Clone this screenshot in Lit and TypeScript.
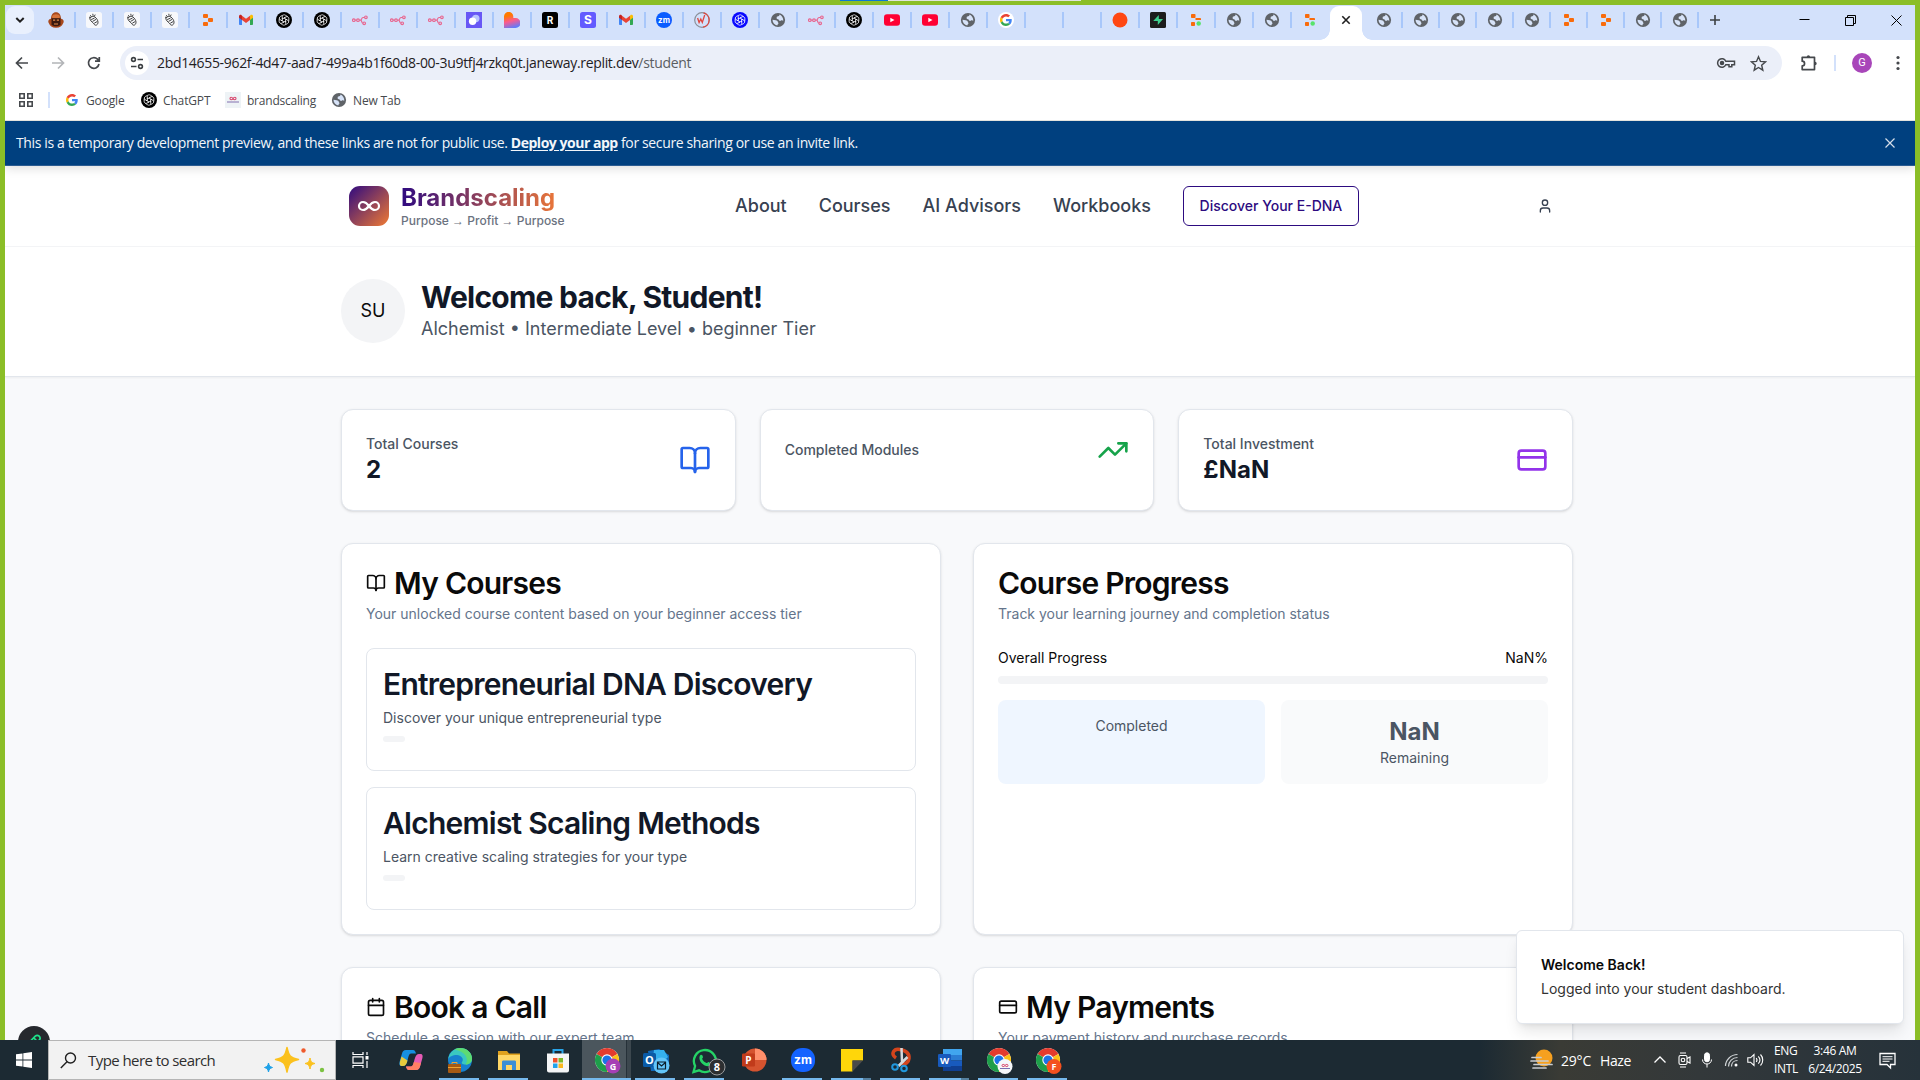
import { LitElement, html, css, svg, TemplateResult } from "lit";
import { customElement } from "lit/decorators.js";

/* ---------- shared glyphs ---------- */

const knot = (bg: string, fg = "#fff") => html`<svg width="16" height="16" viewBox="0 0 16 16">
  <circle cx="8" cy="8" r="8" fill=${bg} />
  <g fill="none" stroke=${fg} stroke-width=".75">
    ${[0, 60, 120, 180, 240, 300].map(
      (a) => svg`<path transform="rotate(${a} 8 8)" d="M6.300 6.900V4.600a1.900 1.900 0 0 1 2.900-1.500l2.300 1.400M8 6l2.800 1.700" />`
    )}
  </g>
</svg>`;

const globe = html`<svg width="16" height="16" viewBox="0 0 16 16">
  <circle cx="8" cy="8" r="7.100" fill="#5f6368" />
  <path d="M9.600 2.600c-.3 1.500-1 1.900-2.200 2-.9.1-.9.9-.6 1.400.3.6-.2 1-.8 1 1.600 0 2.600.2 3 1.200.4.900 1.400.9 2 .4.600-.5 1.500-.3 2.300.2.100-2.700-1.500-5.200-3.700-6.200z" fill="#d7e3f8" />
  <path d="M2.500 7.800l3.200.4c1.200.2 1.900.8 2.100 1.600.1.700.8.8.6 1.700-.2.800-.9.8-1.100 2-2.800-.5-4.800-2.900-4.800-5.700z" fill="#d7e3f8" />
</svg>`;

const gmail = html`<svg width="16" height="16" viewBox="0 0 16 16">
  <path d="M1 4v8.200c0 .5.4.8.9.8H4V6.500z" fill="#4285f4" />
  <path d="M15 4v8.200c0 .5-.4.8-.9.8H12V6.500z" fill="#34a853" />
  <path d="M12 3.700V8l3-2.300V4.200c0-1.500-1.600-1.900-2.400-1.200z" fill="#fbbc04" />
  <path d="M4 8V3.700l4 3 4-3V8l-4 3z" fill="#ea4335" />
  <path d="M1 4.200v1.500L4 8V3.700L3.400 3C2.500 2.400 1 2.900 1 4.200z" fill="#c5221f" />
</svg>`;

const google = (s: number) => html`<svg width=${s} height=${s} viewBox="0 0 48 48">
  <path fill="#EA4335" d="M24 9.500c3.540 0 6.710 1.220 9.210 3.600l6.850-6.850C35.900 2.380 30.470 0 24 0 14.620 0 6.510 5.380 2.560 13.220l7.980 6.190C12.430 13.720 17.740 9.500 24 9.500z" />
  <path fill="#4285F4" d="M46.980 24.550c0-1.570-.15-3.090-.38-4.550H24v9.020h12.940c-.58 2.960-2.260 5.480-4.780 7.180l7.730 6c4.510-4.180 7.090-10.360 7.090-17.650z" />
  <path fill="#FBBC05" d="M10.530 28.590c-.48-1.450-.76-2.990-.76-4.590s.27-3.140.76-4.590l-7.980-6.190C.92 16.460 0 20.120 0 24c0 3.880.92 7.540 2.560 10.780l7.970-6.190z" />
  <path fill="#34A853" d="M24 48c6.480 0 11.930-2.130 15.890-5.810l-7.730-6c-2.150 1.450-4.920 2.300-8.160 2.300-6.260 0-11.570-4.220-13.470-9.910l-7.980 6.190C6.510 42.620 14.620 48 24 48z" />
</svg>`;

const shell = html`<svg width="16" height="16" viewBox="0 0 16 16">
  <rect width="16" height="16" rx="2.500" fill="#f7f8fb" />
  <g fill="none" stroke="#2c2c2c" stroke-width=".9" stroke-linejoin="round">
    <path d="M3.800 6.200c1-1.700 3.800-2.400 5.200-1.200 1.500 1.200 3 3.400 3 5.200 0 1.600-.9 3-2.300 3-1.300 0-1.500-1.200-2.500-2.200C5.800 9.700 4 8.500 3.800 6.200z" />
    <path d="M4.300 3.200l1 1.600M6.800 1.800l.3 2M9.200 2.600l-.8 1.600M5.200 7.600l3.300-1.500M6.600 9.400l3.400-2M8.300 11.200l2.800-1.600M3 5l1.500.8" />
  </g>
</svg>`;

const replit = html`<svg width="16" height="16" viewBox="0 0 16 16" fill="#f96b0b">
  <rect x="3" y="2" width="5" height="4" rx="1" />
  <rect x="8" y="6" width="5" height="4" rx="1" />
  <rect x="3" y="10" width="5" height="4" rx="1" />
</svg>`;

const replitLive = html`<svg width="16" height="16" viewBox="0 0 16 16" fill="#f96b0b">
  <rect x="3" y="2" width="4.500" height="4" rx=".8" />
  <path d="M7.500 6h4.700c.5 0 .8.300.8.800V8H7.500z" />
  <rect x="3" y="10" width="4" height="4" rx=".8" />
  <circle cx="10.700" cy="11.500" r="2.200" fill="#57e36b" />
</svg>`;

const flow = html`<svg width="16" height="16" viewBox="0 0 16 16" fill="none" stroke="#e8668f" stroke-width="1.200">
  <circle cx="1.800" cy="8.200" r="1.300" /><circle cx="6" cy="8.200" r="1.300" />
  <path d="M3.100 8.200h1.600M7.300 8.200h1.200c1.500 0 .8-2.700 2.500-2.700h1.500M8.800 8.400c1.200.2.800 2.800 2 2.800" />
  <circle cx="13.900" cy="5.300" r="1.300" /><circle cx="12.200" cy="11.300" r="1.300" />
</svg>`;

const youtube = html`<svg width="16" height="16" viewBox="0 0 16 16">
  <rect y="2.300" width="16" height="11.400" rx="3" fill="#ff0033" /><path d="M6.300 5.700L10.500 8l-4.200 2.300z" fill="#fff" />
</svg>`;

const letterTile = (ch: string, bg: string, size: number) => html`<svg width="16" height="16" viewBox="0 0 16 16">
  <rect width="16" height="16" rx="2.500" fill=${bg} />
  <text x="8" y=${8 + size * 0.36} text-anchor="middle" font-family="Inter, sans-serif" font-weight="700" font-size=${size} fill="#fff">${ch}</text>
</svg>`;

const mascot = html`<svg width="16" height="16" viewBox="0 0 16 16">
  <path d="M1 11.500C-.5 9.500.5 7 3 6.800 3 3 5 .3 8 .3s5 2.700 5 6.500c2.500.2 3.500 2.700 2 4.700-1 2.500-3 4.200-7 4.200s-6-1.700-7-4.200z" fill="#a8481c" />
  <path d="M4 4.500C5 1.500 11 1.500 12 4.500L11.500 6.300h-7z" fill="#d8743a" />
  <path d="M3.500 6.300h9v6c-1.200 2.700-7.800 2.700-9 0z" fill="#3a1a10" />
  <path d="M5 7.500h2.200v1.300H5zM8.800 7.500H11v1.300H8.800zM6 11.500h4v1H6z" fill="#e58b4a" />
</svg>`;

const gradHeart = html`<svg width="16" height="16" viewBox="0 0 16 16">
  <defs><linearGradient id="gh" x1=".3" y1="0" x2=".6" y2="1">
    <stop offset=".2" stop-color="#ff7a00" /><stop offset=".55" stop-color="#fb5a8e" /><stop offset="1" stop-color="#5b7bff" />
  </linearGradient></defs>
  <path d="M0 4.500a4.600 4.600 0 0 1 9.300 0V6h2.200a4.700 4.700 0 0 1 0 10H0z" fill="url(#gh)" />
</svg>`;

const zoomIcon = html`<svg width="16" height="16" viewBox="0 0 16 16">
  <circle cx="8" cy="8" r="8" fill="#0b5cff" />
  <text x="8" y="10.700" text-anchor="middle" font-family="Inter, sans-serif" font-weight="700" font-size="8" fill="#fff">zm</text>
</svg>`;

const wIcon = html`<svg width="16" height="16" viewBox="0 0 16 16" fill="none">
  <circle cx="8" cy="8" r="7.300" stroke="#8a8f99" stroke-width="1.200" />
  <path d="M9.500.9A7.300 7.300 0 0 1 9 15.200" stroke="#e0463e" stroke-width="1.200" />
  <path d="M3.600 6l1.500 4.500L6.800 7l1.500 3.500L10.700 3" stroke="#e0463e" stroke-width="1.300" />
</svg>`;

const purpleTile = html`<svg width="16" height="16" viewBox="0 0 16 16">
  <rect width="16" height="16" fill="#6857f5" />
  <circle cx="9.800" cy="6.500" r="3.700" fill="#b9c4ff" /><circle cx="6.600" cy="9.200" r="3.700" fill="#fff" />
</svg>`;

const bolt = html`<svg width="16" height="16" viewBox="0 0 16 16">
  <rect width="16" height="16" rx="1.500" fill="#1c1c1c" />
  <path d="M8.800 3L3.200 9h4.600v4L13 7H8.800z" fill="#3ecf8e" />
</svg>`;

const redDot = html`<svg width="16" height="16" viewBox="0 0 16 16"><circle cx="8" cy="8" r="7.500" fill="#ff4713" /></svg>`;

const googleBadge = html`<span class="disc">${google(12)}</span>`;

/* ---------- outlined page icons ---------- */

const outline = (size: number, body: unknown) => html`<svg
  width=${size} height=${size} viewBox="0 0 24 24" fill="none" stroke="currentColor"
  stroke-width="2" stroke-linecap="round" stroke-linejoin="round">${body}</svg>`;

const book = svg`<path d="M12 7v14" /><path d="M3 18a1 1 0 0 1-1-1V4a1 1 0 0 1 1-1h5a4 4 0 0 1 4 4 4 4 0 0 1 4-4h5a1 1 0 0 1 1 1v13a1 1 0 0 1-1 1h-6a3 3 0 0 0-3 3 3 3 0 0 0-3-3z" />`;
const trend = svg`<polyline points="22 7 13.500 15.500 8.500 10.500 2 17" /><polyline points="16 7 22 7 22 13" />`;
const card = svg`<rect width="20" height="14" x="2" y="5" rx="2" /><line x1="2" x2="22" y1="10" y2="10" />`;
const calendar = svg`<path d="M8 2v4" /><path d="M16 2v4" /><rect width="18" height="18" x="3" y="4" rx="2" /><path d="M3 10h18" />`;
const user = svg`<path d="M19 21v-2a4 4 0 0 0-4-4H9a4 4 0 0 0-4 4v2" /><circle cx="12" cy="7" r="4" />`;

/* ---------- browser chrome ---------- */

const leftTabs: (TemplateResult | null)[] = [
  mascot, shell, shell, shell, replit, gmail, knot("#000"), knot("#000"), flow, flow, flow, purpleTile, gradHeart,
  letterTile("R", "#000", 10), letterTile("S", "#635bff", 12), gmail, zoomIcon, wIcon, knot("#0a0aff"), globe, flow,
  knot("#000"), youtube, youtube, globe, googleBadge, null, null, redDot, bolt, replitLive, globe, globe, replitLive,
];
const rightTabs = [globe, globe, globe, globe, globe, replit, replit, globe, globe];

@customElement("browser-chrome")
export class BrowserChrome extends LitElement {
  static styles = css`
    :host { display: block; font-family: "Open Sans", "Noto Sans", sans-serif; background: #fff; }
    svg { display: block; flex: none; }
    .tabs { height: 35px; background: #d3e1fb; display: flex; padding-left: 1px; }
    .search { width: 28px; height: 28px; margin: 1px 4px 0 0; border-radius: 9px; background: #e9f0fd; display: grid; place-items: center; }
    .tab { box-sizing: border-box; width: 38px; height: 16px; margin-top: 7px; border-right: 2px solid #a8c7fa; display: grid; place-items: center; }
    .tab.last { width: 36px; border: 0; }
    .tab.slim { width: 37px; }
    .disc { width: 16px; height: 16px; border-radius: 50%; background: #fff; display: grid; place-items: center; }
    .active { position: relative; width: 32px; height: 34px; margin: 1px 4px 0 2px; background: #fff; border-radius: 9px 9px 0 0; display: grid; place-items: center; padding-bottom: 6px; box-sizing: border-box; }
    .active::before, .active::after { content: ""; position: absolute; bottom: 0; width: 10px; height: 10px; }
    .active::before { left: -10px; background: radial-gradient(circle at 0 0, #d3e1fb 9.500px, #fff 10px); }
    .active::after { right: -10px; background: radial-gradient(circle at 100% 0, #d3e1fb 9.500px, #fff 10px); }
    .plus { margin: 10px 0 0 11px; }
    .win { margin-left: auto; display: flex; gap: 35px; padding: 10px 13px 0 0; }
    .bar { height: 46px; display: flex; align-items: center; color: #45484c; }
    .nav { display: flex; gap: 16px; padding: 0 0 0 7px; width: 108px; }
    .url { width: 1662px; height: 34px; box-sizing: border-box; border-radius: 17px; background: #ebeff9; display: flex; align-items: center; padding: 0 15px 0 5px; }
    .site { width: 24px; height: 24px; border-radius: 50%; background: #fff; display: grid; place-items: center; margin-right: 8px; }
    .address { padding-bottom: 1px; font-size: 14px; letter-spacing: -0.32px; color: #1f2023; white-space: nowrap; }
    .address span { color: #5a5d62; }
    .end { margin-left: auto; display: flex; gap: 14px; align-items: center; }
    .vsep { width: 2px; height: 16px; background: #d3e1fb; }
    .tools { display: flex; align-items: center; padding-left: 17px; }
    .tools .vsep { margin: 0 16px 0 15px; }
    .me { width: 20px; height: 20px; border-radius: 50%; background: #a846b9; color: #fff; font: 11px/20px Roboto, sans-serif; text-align: center; margin-right: 16px; }
    .marks { height: 35px; box-sizing: border-box; padding: 0 0 6px 14px; border-bottom: 1px solid #e3e3de; display: flex; align-items: center; font-size: 12px; letter-spacing: -0.15px; color: #46494d; }
    .marks .vsep { margin: 0 16px 0 15px; }
    .mark { display: flex; align-items: center; gap: 6px; white-space: nowrap; }
    .mark.g { width: 75px; gap: 8px; }
    .mark.c { width: 84px; }
    .mark.b { width: 106px; letter-spacing: -0.22px; }
    .bs { background: #eef3f6; }
  `;

  render() {
    return html`
      <div class="tabs">
        <div class="search"><svg width="10" height="10" viewBox="0 0 10 10" fill="none" stroke="#1f1f1f" stroke-width="2"><path d="M1.300 3l3.700 3.700L8.700 3" /></svg></div>
        ${leftTabs.map((t, i) => html`<div class="tab ${i === leftTabs.length - 1 ? "last" : ""}">${t}</div>`)}
        <div class="active"><svg width="10" height="10" viewBox="0 0 10 10" stroke="#1f1f1f" stroke-width="1.600"><path d="M1.300 1.300l7.400 7.400M8.700 1.300L1.300 8.700" /></svg></div>
        ${rightTabs.map((t) => html`<div class="tab slim">${t}</div>`)}
        <svg class="plus" width="10" height="10" viewBox="0 0 10 10" stroke="#3c4043" stroke-width="1.600"><path d="M5 0v10M0 5h10" /></svg>
        <div class="win">
          <svg width="11" height="11" viewBox="0 0 11 11" stroke="#000"><path d="M.5 4.500h10" /></svg>
          <svg width="11" height="11" viewBox="0 0 11 11" stroke="#000" fill="none"><path d="M.5 2.500h8v8h-8zM2.500 2.500v-2h8v8h-2" /></svg>
          <svg width="11" height="11" viewBox="0 0 11 11" stroke="#000"><path d="M.5.5l10 10M10.500.5l-10 10" /></svg>
        </div>
      </div>
      <div class="bar">
        <div class="nav">
          <svg width="20" height="20" viewBox="0 0 20 20" fill="none" stroke="currentColor" stroke-width="1.700"><path d="M16 10H5M10 4.500L4.500 10l5.500 5.500" /></svg>
          <svg width="20" height="20" viewBox="0 0 20 20" fill="none" stroke="#b3b5b8" stroke-width="1.700"><path d="M4 10h11M10 4.500l5.500 5.500-5.500 5.500" /></svg>
          <svg width="20" height="20" viewBox="0 0 20 20" fill="none" stroke="currentColor" stroke-width="1.700"><path d="M15 11a5.300 5.300 0 1 1-1.500-4.800L15 7.800M15.300 4v4.200H11" /></svg>
        </div>
        <div class="url">
          <div class="site">
            <svg width="14" height="14" viewBox="0 0 14 14" fill="none" stroke="#3c4043" stroke-width="1.600"><circle cx="3.500" cy="3.500" r="1.900" /><path d="M7.500 3.500H13M1 10.500h5.500" /><circle cx="10.500" cy="10.500" r="1.900" /></svg>
          </div>
          <div class="address">2bd14655-962f-4d47-aad7-499a4b1f60d8-00-3u9tfj4rzkq0t.janeway.replit.dev<span>/student</span></div>
          <div class="end">
            <svg width="20" height="16" viewBox="0 0 20 16" fill="none" stroke="currentColor" stroke-width="1.500"><path d="M9.800 6.200A4.300 4.300 0 1 0 9.800 9.800H13v2h2.800v-2H18.500V6.200z" /><circle cx="6" cy="8" r="1.500" fill="currentColor" /></svg>
            <svg width="17" height="17" viewBox="0 0 24 24" fill="none" stroke="currentColor" stroke-width="2"><path d="M12 2.500l2.800 6.600 7.100.6-5.400 4.700 1.600 7L12 17.600l-6.100 3.800 1.600-7L2.100 9.700l7.100-.6z" /></svg>
          </div>
        </div>
        <div class="tools">
          <svg width="20" height="20" viewBox="0 0 20 20" fill="none" stroke="currentColor" stroke-width="1.700"><path d="M3.200 4.300h12.300v12.300H3.200v-3.700a2.300 2.300 0 0 0 0-4.700z" stroke-linejoin="round" /><path d="M7.700 4a1.700 1.700 0 0 1 3.400 0zM16 8.800a1.700 1.700 0 0 1 0 3.400z" fill="currentColor" stroke="none" /></svg>
          <div class="vsep"></div>
          <div class="me">G</div>
          <svg width="20" height="20" viewBox="0 0 20 20" fill="currentColor"><circle cx="10" cy="4.500" r="1.600" /><circle cx="10" cy="10" r="1.600" /><circle cx="10" cy="15.500" r="1.600" /></svg>
        </div>
      </div>
      <div class="marks">
        <svg width="14" height="14" viewBox="0 0 14 14" fill="none" stroke="#46494d" stroke-width="1.600"><path d="M.8.8h4.400v4.400H.8zM8.800.8h4.400v4.400H8.800zM.8 8.800h4.400v4.400H.8zM8.800 8.800h4.400v4.400H8.800z" /></svg>
        <div class="vsep"></div>
        <div class="mark g">${google(12)}<span>Google</span></div>
        <div class="mark c">${knot("#000")}<span>ChatGPT</span></div>
        <div class="mark b"><svg class="bs" width="16" height="16" viewBox="0 0 16 16" fill="none"><path d="M8 6.500c-1-1.700-3-1.700-3 0s2 1.700 3 0 3-1.700 3 0-2 1.700-3 0z" stroke="#d8486e" stroke-width="1.100" /><path d="M2 10h12" stroke="#8c7bb5" stroke-width="1.100" /></svg><span>brandscaling</span></div>
        <div class="mark">${globe}<span>New Tab</span></div>
      </div>
    `;
  }
}

/* ---------- dashboard page ---------- */

const stats = [
  { label: "Total Courses", value: "2", icon: book, tone: "blue" },
  { label: "Completed Modules", value: "", icon: trend, tone: "green" },
  { label: "Total Investment", value: "£NaN", icon: card, tone: "purple" },
];

const courses = [
  { name: "Entrepreneurial DNA Discovery", about: "Discover your unique entrepreneurial type" },
  { name: "Alchemist Scaling Methods", about: "Learn creative scaling strategies for your type" },
];

@customElement("student-dashboard")
export class StudentDashboard extends LitElement {
  static styles = css`
    :host { display: block; position: relative; overflow: hidden; background: #f8f9fb; font-family: Inter, sans-serif; color: #0a0a0a; font-size: 14px; line-height: 20px; }
    svg { display: block; flex: none; }
    .banner { box-sizing: border-box; height: 45px; padding: 0 20px 1px 11px; background: #00407f; border-bottom: 1px solid #2b5c92; color: #f2f6fa; font: 500 14px/20px "Open Sans", "Noto Sans", sans-serif; letter-spacing: -0.37px; display: flex; align-items: center; justify-content: space-between; position: relative; z-index: 1; box-shadow: 0 2px 10px rgba(0, 0, 0, 0.14); }
    .banner b { font-weight: 700; text-decoration: underline; text-underline-offset: 2px; letter-spacing: -0.47px; }
    .wrap { width: 1232px; margin-left: 336px; }
    .top { background: #fff; border-bottom: 1px solid #f3f4f6; }
    .head { height: 80px; display: flex; align-items: center; box-sizing: border-box; padding-left: 8px; }
    .logo { width: 40px; height: 40px; border-radius: 11px; background: linear-gradient(135deg, #2f0a80, #f07a33); display: grid; place-items: center; margin-right: 12px; }
    .brand { width: 334px; }
    .brand h2 { margin: 0; width: max-content; font-size: 24px; line-height: 28px; font-weight: 700; background: linear-gradient(90deg, #2f0a80, #e8753a); -webkit-background-clip: text; background-clip: text; color: transparent; }
    .brand p { margin: 1px 0 0; font-size: 12px; line-height: 16px; font-weight: 500; color: #6b7280; }
    .brand i { font: 12px/12px "Liberation Sans", sans-serif; }
    .links { display: flex; align-items: center; gap: 32px; font-size: 18px; font-weight: 500; color: #374151; }
    .cta { box-sizing: border-box; width: 176px; height: 40px; border: 1px solid #2d0b80; border-radius: 6px; text-align: center; line-height: 38px; font-size: 14px; color: #2d0b80; }
    .person { margin-left: auto; margin-right: 20px; color: #374151; }
    .hello { background: #fff; border-bottom: 1px solid #e2e6ec; box-shadow: 0 1px 2px rgba(0, 0, 0, 0.05); }
    .hello .wrap { box-sizing: border-box; height: 129px; padding-bottom: 1px; display: flex; align-items: center; gap: 16px; }
    .avatar { width: 64px; height: 64px; border-radius: 50%; background: #f3f4f6; display: grid; place-items: center; font-size: 18px; }
    h1 { margin: 0; font-size: 30px; line-height: 36px; font-weight: 700; letter-spacing: -0.75px; color: #111827; }
    .hello p { margin: 0; font-size: 18px; line-height: 28px; color: #4b5563; }
    .body { padding-top: 32px; display: flex; flex-direction: column; gap: 32px; }
    .stats { display: grid; grid-template-columns: repeat(3, 1fr); gap: 24px; }
    .card { box-sizing: border-box; background: #fff; border: 1px solid #e2e6ec; border-radius: 12px; padding: 24px; box-shadow: 0 1px 3px rgba(0, 0, 0, 0.1), 0 1px 2px -1px rgba(0, 0, 0, 0.1); }
    .stats .card { height: 102px; }
    .stat { display: flex; align-items: center; justify-content: space-between; }
    .stat p { margin: 0; font-weight: 500; color: #4b5563; }
    .stat strong { display: block; font-size: 24px; line-height: 32px; font-weight: 700; color: #111827; }
    .blue { color: #2563eb; }
    .green { color: #16a34a; }
    .purple { color: #9333ea; }
    .pair { display: grid; grid-template-columns: 1fr 1fr; gap: 32px; }
    .title { display: flex; align-items: center; gap: 8px; font-size: 30px; line-height: 30px; font-weight: 600; letter-spacing: -0.75px; }
    .desc { margin: 6px 0 24px; color: #64748b; }
    .list { display: grid; gap: 16px; }
    .course { box-sizing: border-box; height: 123px; padding: 16px; border: 1px solid #e2e6ec; border-radius: 8px; }
    .course h3 { margin: 0 0 4px; font-size: 30px; line-height: 39px; font-weight: 600; letter-spacing: -0.75px; color: #111827; }
    .course p { margin: 0; color: #4b5563; }
    .chip { width: 22px; height: 6px; margin-top: 8px; border-radius: 3px; background: #f3f4f6; }
    .row { display: flex; justify-content: space-between; }
    .track { height: 8px; margin: 8px 0 16px; border-radius: 4px; background: #f3f4f6; }
    .boxes { display: grid; grid-template-columns: 1fr 1fr; gap: 16px; text-align: center; color: #4b5563; }
    .box { box-sizing: border-box; height: 84px; padding: 16px; border-radius: 8px; background: #f9fafb; }
    .box.tint { background: #eff6ff; }
    .box strong { display: block; font-size: 24px; line-height: 32px; }
    .toast { position: absolute; right: 11px; bottom: 16px; width: 388px; height: 94px; box-sizing: border-box; padding: 24px; background: #fff; border: 1px solid #e2e6ec; border-radius: 6px; box-shadow: 0 10px 15px -3px rgba(0, 0, 0, 0.1), 0 4px 6px -4px rgba(0, 0, 0, 0.1); }
    .toast strong { display: block; font-weight: 600; margin-bottom: 4px; }
    .toast span { color: #333; }
    .dev { position: absolute; left: 13px; bottom: -18px; width: 32px; height: 32px; border-radius: 50%; background: #26282d; display: grid; place-items: center; }
  `;

  render() {
    return html`
      <div class="banner">
        <span>This is a temporary development preview, and these links are not for public use. <b>Deploy your app</b> for secure sharing or use an invite link.</span>
        <svg width="10" height="10" viewBox="0 0 10 10" stroke="#d5dfea" stroke-width="1.200"><path d="M.5.5l9 9M9.500.5l-9 9" /></svg>
      </div>
      <div class="top"><div class="wrap head">
        <div class="logo"><svg width="24" height="24" viewBox="0 0 24 24" fill="none" stroke="#fff" stroke-width="2.200" stroke-linecap="round"><path d="M12 12c-2-2.700-4-4-6-4a4 4 0 0 0 0 8c2 0 4-1.300 6-4zm0 0c2 2.700 4 4 6 4a4 4 0 0 0 0-8c-2 0-4 1.300-6 4z" /></svg></div>
        <div class="brand"><h2>Brandscaling</h2><p>Purpose <i>→</i> Profit <i>→</i> Purpose</p></div>
        <div class="links"><span>About</span><span>Courses</span><span>AI Advisors</span><span>Workbooks</span><span class="cta">Discover Your E-DNA</span></div>
        <div class="person">${outline(16, user)}</div>
      </div></div>
      <div class="hello"><div class="wrap">
        <div class="avatar">SU</div>
        <div><h1>Welcome back, Student!</h1><p>Alchemist • Intermediate Level • beginner Tier</p></div>
      </div></div>
      <div class="wrap body">
        <div class="stats">
          ${stats.map((s) => html`<div class="card"><div class="stat">
            <div><p>${s.label}</p>${s.value ? html`<strong>${s.value}</strong>` : null}</div>
            <span class=${s.tone}>${outline(32, s.icon)}</span>
          </div></div>`)}
        </div>
        <div class="pair">
          <div class="card">
            <div class="title">${outline(20, book)}<span>My Courses</span></div>
            <p class="desc">Your unlocked course content based on your beginner access tier</p>
            <div class="list">
              ${courses.map((c) => html`<div class="course"><h3>${c.name}</h3><p>${c.about}</p><div class="chip"></div></div>`)}
            </div>
          </div>
          <div class="card">
            <div class="title"><span>Course Progress</span></div>
            <p class="desc">Track your learning journey and completion status</p>
            <div class="row"><span>Overall Progress</span><span>NaN%</span></div>
            <div class="track"></div>
            <div class="boxes">
              <div class="box tint">Completed</div>
              <div class="box"><strong>NaN</strong>Remaining</div>
            </div>
          </div>
        </div>
        <div class="pair">
          <div class="card">
            <div class="title">${outline(20, calendar)}<span>Book a Call</span></div>
            <p class="desc">Schedule a session with our expert team</p>
          </div>
          <div class="card">
            <div class="title">${outline(20, card)}<span>My Payments</span></div>
            <p class="desc">Your payment history and purchase records</p>
          </div>
        </div>
      </div>
      <div class="toast"><strong>Welcome Back!</strong><span>Logged into your student dashboard.</span></div>
      <div class="dev"><svg width="18" height="18" viewBox="0 0 14 14" fill="none" stroke="#1fe08a" stroke-width="1.300"><path d="M2 11.500L3.500 7 8 2.500c1-1 2-1 3 0s1 2 0 3L6.500 10zM7 4l3 3" /></svg></div>
    `;
  }
}

/* ---------- taskbar ---------- */

const chromeIcon = (badge: unknown) => svg`
  <circle cx="14" cy="12" r="12" fill="#fff" />
  <path d="M14 12L3.600 6A12 12 0 0 1 24.400 6z" fill="#e33b2e" />
  <path d="M14 12L24.400 6A12 12 0 0 1 14 24z" fill="#fbc116" />
  <path d="M14 12L14 24A12 12 0 0 1 3.600 6z" fill="#1e9e4a" />
  <circle cx="14" cy="12" r="5.700" fill="#fff" /><circle cx="14" cy="12" r="4.600" fill="#1a73e8" />${badge}`;

const lettered = (ch: string, x: number, y: number, size: number) =>
  svg`<text x=${x} y=${y} text-anchor="middle" font-family="Open Sans, sans-serif" font-weight="700" font-size=${size} fill="#fff">${ch}</text>`;

const apps: { name: string; state: string; art: unknown }[] = [
  { name: "copilot", state: "", art: svg`
    <path d="M9 2h7c2 0 2.500 2 3 3.500H14c-2 0-2.500 3-3.500 7S8 18 6 18H4.500C2 18 2 15.500 3 12.500l2-7C5.700 3.500 6.500 2 9 2z" fill="#1790e0" />
    <path d="M3.500 12l1-3.500 6 4C9.800 16 8.500 18 6 18H4.500C2.500 18 2.500 14.500 3.500 12z" fill="#e8c93c" />
    <path d="M19 22h-7c-2 0-2.500-2-3-3.500h5c2 0 2.500-3 3.500-7S20 6 22 6h1.500C26 6 26 8.500 25 11.500l-2 7c-.7 2-1.500 3.500-4 3.500z" fill="#e65bb5" />
    <path d="M12 22c-2 0-2.500-2-3-3.500h5c1.500 0 2.200-2 2.900-4.500l7.100 1-1 3.500c-.7 2-1.500 3.500-4 3.500z" fill="#ff8064" />` },
  { name: "edge", state: "open", art: svg`
    <circle cx="14" cy="12" r="12" fill="#1781cf" />
    <path d="M2.200 11C3.500 4 8.500 0 14 0c7 0 12 5 12 10.500 0 4-3 6-6.500 6-3 0-4.500-1.300-3.500-2.500 2.500-3-1-7-5-7-4.500 0-7.800 2-8.800 4z" fill="#3ac8c0" />
    <path d="M14 0c7 0 12 5 12 10.500 0 4-3 6-6.500 6 4-6-.5-13-11-15C10 .5 12 0 14 0z" fill="#5ddb73" />
    <rect x="2" y="16" width="13" height="9" rx="1" fill="#a65a14" /><path d="M2 19.500h13M6 16v-1.500h5V16" stroke="#f1a330" fill="none" />` },
  { name: "files", state: "open", art: svg`
    <path d="M3 3h9l2 2.500h11V22H3z" fill="#e0a21e" /><path d="M3 7h22v15H3z" fill="#ffd766" />
    <path d="M7 22v-8c0-1 .5-1.500 1.500-1.500h11c1 0 1.500.5 1.500 1.500v8h-4v-5h-6v5z" fill="#3a8fd6" />` },
  { name: "store", state: "", art: svg`
    <path d="M9.500 6V2h9v4" fill="none" stroke="#29a4e8" stroke-width="2" />
    <path d="M3 5.500h22v17c0 1-1 2-2 2H5c-1 0-2-1-2-2z" fill="#f4f5f6" />
    <path d="M9 10h4.500v4.500H9z" fill="#f0502a" /><path d="M14.500 10H19v4.500h-4.500z" fill="#7cb928" />
    <path d="M9 15.500h4.500V20H9z" fill="#1fa3ec" /><path d="M14.500 15.500H19V20h-4.500z" fill="#f8b61e" />` },
  { name: "chrome", state: "open current", art: chromeIcon(svg`<circle cx="20" cy="18" r="7.500" fill="#a63fb5" />${lettered("G", 20, 21.5, 9)}`) },
  { name: "mail", state: "open", art: svg`
    <path d="M6 3l11-2 10 6v13l-8 3H9z" fill="#1066b5" /><path d="M12 2h10l4 7-6 6-9-5z" fill="#35b0ee" />
    <rect x="1" y="5" width="13" height="14" rx="1.500" fill="#0a5aa6" />${lettered("O", 7.5, 16, 11)}
    <circle cx="19.500" cy="17.500" r="8" fill="#63c5f8" />
    <path d="M15.500 14h8v7h-8zM15.500 14.500l4 3.500 4-3.500" fill="none" stroke="#0b1e2b" stroke-width="1.200" />` },
  { name: "chat", state: "open", art: svg`
    <path d="M2.500 24l1.600-6A11 11 0 1 1 8 22.300z" fill="none" stroke="#25d366" stroke-width="2.300" />
    <path d="M9.500 7c1-.8 2 0 2.500 2 .2.800-1 1.200-.8 2 .8 2 2.300 3.200 4.300 4 1 .2 1.200-1.200 2-1 2 .8 2.500 1.500 2 2.500-1.500 3-6 1.500-8.500-1S7.500 9 9.500 7z" fill="#25d366" />
    <circle cx="26" cy="19" r="8" fill="#2d2f31" stroke="#9a9c9e" />${lettered("8", 26, 23, 11)}` },
  { name: "slides", state: "", art: svg`
    <circle cx="15" cy="12" r="11.500" fill="#d5532f" /><path d="M15 .5A11.500 11.500 0 0 1 26.500 12H15z" fill="#ff8f6b" />
    <rect x="2" y="5.500" width="13" height="13" rx="1.200" fill="#c13b1b" />${lettered("P", 8.5, 15.8, 10)}` },
  { name: "meet", state: "open", art: svg`
    <rect x="2" y="0" width="24" height="24" rx="11" fill="#1463ff" /><text x="14" y="16" text-anchor="middle" font-family="Inter, sans-serif" font-weight="700" font-size="12" fill="#fff">zm</text>` },
  { name: "notes", state: "open multi", art: svg`
    <path d="M3 1h22v11.500H14.500v11H3z" fill="#ffd60a" /><path d="M14.500 12.500H25l-10.500 11z" fill="#4a4a4a" />` },
  { name: "snip", state: "open", art: svg`
    <path d="M9 10C3 6 7 0 13 1.500c6 1 9.500 4 9 9-.3 3.500-3.500 6-7 5.500" fill="none" stroke="#d3441c" stroke-width="3.500" />
    <path d="M14.500 0l.5 14M20.500 9l-9 9" stroke="#d6d9dc" stroke-width="2.500" />
    <circle cx="8" cy="19" r="2.800" fill="none" stroke="#2197dc" stroke-width="2" /><circle cx="17" cy="20.500" r="2.800" fill="none" stroke="#2197dc" stroke-width="2" />` },
  { name: "docs", state: "open multi", art: svg`
    <path d="M7 1h19v6H7z" fill="#41a5ee" /><path d="M7 7h19v5.500H7z" fill="#2b7cd3" /><path d="M7 12.500h19V18H7z" fill="#185abd" /><path d="M7 18h19v5H7z" fill="#103f91" />
    <rect x="2" y="6" width="13" height="13" rx="1.200" fill="#185abd" />${lettered("W", 8.5, 16, 9.5)}` },
  { name: "chrome-b", state: "open", art: chromeIcon(svg`<circle cx="20" cy="18.500" r="7.500" fill="#f4f6fa" /><path d="M20 17.500c-1-1.500-3-1.500-3 0s2 1.500 3 0 3-1.500 3 0-2 1.500-3 0z" fill="none" stroke="#d8486e" /><path d="M15 20.500h10" stroke="#7a6fb0" />`) },
  { name: "chrome-f", state: "open", art: chromeIcon(svg`<circle cx="20" cy="18.500" r="7.500" fill="#f4511e" />${lettered("F", 20, 22, 9)}`) },
];

@customElement("task-bar")
export class TaskBar extends LitElement {
  static styles = css`
    :host { display: flex; height: 40px; background: linear-gradient(90deg, #1c2a33 0 1480px, #3a3b35 1560px, #33383a 1700px, #26323a 1920px); color: #fff; font-family: "Open Sans", "Noto Sans", sans-serif; }
    svg { display: block; flex: none; overflow: visible; }
    .start { width: 48px; display: grid; place-items: center; }
    .find { box-sizing: border-box; width: 288px; border: 1px solid #b5b5b5; background: #f2f2f2; display: flex; align-items: center; padding: 0 2px 0 11px; color: #2f2f2f; font-size: 15px; letter-spacing: -0.57px; }
    .find span { margin: 0 auto 0 11px; white-space: nowrap; }
    .view { width: 50px; display: grid; place-items: center; padding-right: 1px; box-sizing: border-box; }
    .app { position: relative; box-sizing: border-box; width: 49px; display: flex; justify-content: center; padding-top: 8px; }
    .app.current { background: linear-gradient(90deg, #4b565d 44px, #263139 44px 45px, #3c474e 45px); }
    .app.open::after { content: ""; position: absolute; left: 4px; right: 5px; bottom: 0; height: 2px; background: #76b9ed; }
    .app.current::after { left: 0; right: 0; }
    .app.multi::after { background: linear-gradient(90deg, #76b9ed 32px, #55809f 32px); }
    .tray { margin-left: auto; display: flex; align-items: center; font-size: 14px; white-space: nowrap; letter-spacing: -0.2px; }
    .weather { margin: 0 7px 0 8px; }
    .deg { width: 39px; }
    .haze { width: 52px; letter-spacing: -0.4px; }
    .icons { display: flex; gap: 7.5px; align-items: center; margin-right: 10px; }
    .small { font-size: 12px; line-height: 18px; letter-spacing: -0.35px; }
    .lang { width: 33px; }
    .clock { width: 56px; text-align: center; }
    .bell { margin: 0 24px 0 16px; }
  `;

  render() {
    return html`
      <div class="start"><svg width="16" height="16" viewBox="0 0 16 16" fill="#fff"><path d="M0 2.300L6.500 1.400v6.200H0zM7.300 1.300L16 0v7.600H7.300zM0 8.400h6.500v6.200L0 13.700zM7.300 8.400H16V16l-8.700-1.300z" /></svg></div>
      <div class="find">
        <svg width="17" height="17" viewBox="0 0 17 17" fill="none" stroke="#1f1f1f" stroke-width="1.400"><circle cx="10.500" cy="6" r="5" /><path d="M7 9.700L.8 16" /></svg>
        <span>Type here to search</span>
        <svg width="66" height="32" viewBox="0 0 66 32">
          <path d="M20 3.500c2 9 3 10 11.500 12C23 17.500 22 19 20 28c-2-9-3-10.500-11.500-12.500C17 13.500 18 12.500 20 3.500z" fill="#fbc11d" stroke="#fbc11d" stroke-width="1.500" stroke-linejoin="round" />
          <path d="M43 14c1 4 1.500 4.500 5 5.500-3.500 1-4 1.500-5 5.500-1-4-1.500-4.500-5-5.500 3.500-1 4-1.500 5-5.500z" fill="#fbc11d" stroke="#fbc11d" stroke-linejoin="round" />
          <path d="M1.500 19c.7 3 1.200 3.500 4 4.500-2.800 1-3.300 1.500-4 4.500-.7-3-1.200-3.500-4-4.500 2.800-1 3.300-1.500 4-4.500z" fill="#1ea1e8" stroke="#1ea1e8" stroke-linejoin="round" />
          <circle cx="36.500" cy="6.500" r="2.200" fill="#ef5a2c" /><circle cx="55" cy="26" r="2.200" fill="#7cc242" />
        </svg>
      </div>
      <div class="view"><svg width="17" height="16" viewBox="0 0 17 16" fill="none" stroke="#fff" stroke-width="1.200"><path d="M1 0v2.500h10V0M1 4.800h10v6.400H1zM1 16v-2.500h10V16M15 0v3M15 9v7" /><path d="M13.500 4h3v3.500h-3z" fill="#fff" stroke="none" /></svg></div>
      ${apps.map((a) => html`<div class="app ${a.state}"><svg width="28" height="26" viewBox="0 0 28 26">${a.art}</svg></div>`)}
      <div class="tray">
        <svg class="weather" width="24" height="24" viewBox="0 0 24 24"><circle cx="14" cy="10" r="8.500" fill="#f6a01f" /><path d="M2 9.500h9M1 13h17M4 16.500h18M3 20h13" stroke="#c9ccd0" stroke-width="1.700" stroke-linecap="round" /></svg>
        <span class="deg">29°C</span><span class="haze">Haze</span>
        <div class="icons">
          <svg width="16" height="16" viewBox="0 0 16 16" fill="none" stroke="#fff" stroke-width="1.300"><path d="M2.500 10.500L8 5l5.500 5.500" /></svg>
          <svg width="16" height="16" viewBox="0 0 16 16" fill="none" stroke="#fff" stroke-width="1.100"><rect x="3" y="3.500" width="8" height="9" rx="1.500" /><path d="M11 6.500l3-1.500v6l-3-1.500M4 1h6M4 15h6" /><circle cx="7" cy="8" r="1.800" /></svg>
          <svg width="16" height="16" viewBox="0 0 16 16" fill="none" stroke="#fff"><rect x="5.500" y=".8" width="5" height="9" rx="2.500" fill="#fff" /><path d="M3.500 7.500c0 6 9 6 9 0M8 12v3.500" /></svg>
          <svg width="17" height="16" viewBox="0 0 17 16" fill="none" stroke="#cfd3d5" stroke-width="1.200"><path d="M2.500 14C2.500 8 8 2.500 14.500 2.500M5.500 14.500c0-5 4-9 9-9M8.500 14.500c0-3.500 2.500-6 6-6" /><circle cx="13" cy="13" r="1.500" fill="#fff" stroke="none" /></svg>
          <svg width="17" height="16" viewBox="0 0 17 16" fill="none" stroke="#fff" stroke-width="1.100"><path d="M.8 5.800h2.700L7 2.500v11l-3.500-3.300H.8zM9.200 6c1 1.200 1 2.800 0 4M11.300 4.300c2 2.200 2 5.200 0 7.400M13.500 2.500c3 3.200 3 7.800 0 11" /></svg>
        </div>
        <div class="small lang">ENG<br />INTL</div>
        <div class="small clock">3:46 AM<br />6/24/2025</div>
        <svg class="bell" width="17" height="17" viewBox="0 0 17 17"><path d="M1 1.500h15v11h-4.500v3.500L8 12.500H1z" fill="none" stroke="#fff" stroke-width="1.300" /><path d="M3.500 4.700h10M3.500 7h10M3.500 9.300h7" stroke="#fff" /></svg>
      </div>
    `;
  }
}

@customElement("app-root")
export class AppRoot extends LitElement {
  static styles = css`
    :host { display: block; width: 1920px; height: 1080px; overflow: hidden; background: #8bbe27; }
    .edge { height: 5px; padding-left: 840px; display: flex; }
    .edge i { height: 1px; }
    .a { width: 48px; background: #0a78d4; }
    .b { width: 193px; background: #dfe3dc; }
    .window { margin: 0 5px; height: 1035px; display: flex; flex-direction: column; }
    student-dashboard { flex: 1; min-height: 0; }
  `;
  render() {
    return html`
      <div class="edge"><i class="a"></i><i class="b"></i></div>
      <div class="window">
        <browser-chrome></browser-chrome>
        <student-dashboard></student-dashboard>
      </div>
      <task-bar></task-bar>
    `;
  }
}
